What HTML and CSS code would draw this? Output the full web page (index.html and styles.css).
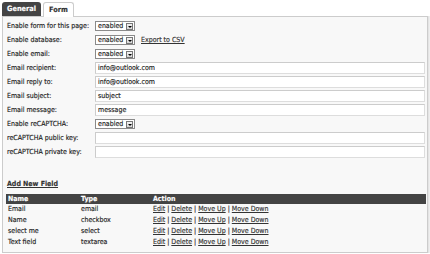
FILE: index.html
```html
<!DOCTYPE html>
<html>
<head>
<meta charset="utf-8">
<link rel="stylesheet" href="styles.css">
</head>
<body>
<div class="wrap">
  <div class="tabs">
    <div class="tab tab-dark">General</div>
    <div class="tab tab-active">Form</div>
  </div>
  <div class="panel">
    <div class="form">
      <div class="row"><span class="label">Enable form for this page:</span><span class="select"><span class="sv">enabled</span><span class="sb"></span></span></div>
      <div class="row"><span class="label">Enable database:</span><span class="select"><span class="sv">enabled</span><span class="sb"></span></span><a class="link export">Export to CSV</a></div>
      <div class="row"><span class="label">Enable email:</span><span class="select"><span class="sv">enabled</span><span class="sb"></span></span></div>
      <div class="row"><span class="label">Email recipient:</span><span class="input">info@outlook.com</span></div>
      <div class="row"><span class="label">Email reply to:</span><span class="input">info@outlook.com</span></div>
      <div class="row"><span class="label">Email subject:</span><span class="input">subject</span></div>
      <div class="row"><span class="label">Email message:</span><span class="input">message</span></div>
      <div class="row"><span class="label">Enable reCAPTCHA:</span><span class="select"><span class="sv">enabled</span><span class="sb"></span></span></div>
      <div class="row"><span class="label">reCAPTCHA public key:</span><span class="input"></span></div>
      <div class="row"><span class="label">reCAPTCHA private key:</span><span class="input"></span></div>
    </div>
    <a class="link add">Add New Field</a>
    <table class="fields">
      <thead>
        <tr><th class="c1">Name</th><th class="c2">Type</th><th>Action</th></tr>
      </thead>
      <tbody>
        <tr><td>Email</td><td>email</td><td><a class="link">Edit</a> | <a class="link">Delete</a> | <a class="link">Move Up</a> | <a class="link">Move Down</a></td></tr>
        <tr><td>Name</td><td>checkbox</td><td><a class="link">Edit</a> | <a class="link">Delete</a> | <a class="link">Move Up</a> | <a class="link">Move Down</a></td></tr>
        <tr><td>select me</td><td>select</td><td><a class="link">Edit</a> | <a class="link">Delete</a> | <a class="link">Move Up</a> | <a class="link">Move Down</a></td></tr>
        <tr><td>Text field</td><td>textarea</td><td><a class="link">Edit</a> | <a class="link">Delete</a> | <a class="link">Move Up</a> | <a class="link">Move Down</a></td></tr>
      </tbody>
    </table>
  </div>
</div>
</body>
</html>
```
FILE: styles.css
```css
* { box-sizing: border-box; }
html, body { margin: 0; padding: 0; background: #fff; }
body {
  font-family: "DejaVu Sans Condensed", "DejaVu Sans", sans-serif;
  font-size: 7px;
  color: #222;
  -webkit-text-stroke: 0.15px currentColor;
}
.wrap { padding: 2px 0 0 2px; width: 430px; }
.tabs { display: flex; gap: 2px; height: 14px; align-items: flex-start; }
.tab {
  font-weight: bold;
  font-size: 7.3px;
  border-radius: 3px 3px 0 0;
  text-align: center;
}
.tab-dark { width: 39px; height: 14px; line-height: 14px; background: #444; color: #fff; }
.tab-active {
  width: 31px;
  height: 15px;
  line-height: 13px;
  background: #fff;
  border: 1px solid #ccc;
  border-bottom: none;
  position: relative;
  color: #333;
}
.panel {
  width: 426px;
  height: 237px;
  border: 1px solid #ccc;
  background: #f8f8f8;
  box-shadow: 1px 0 0 #e4e4e4, 2px 0 0 #eee;
  padding: 2px 2px 0 3px;
}
.form { display: flex; flex-direction: column; }
.row { display: flex; align-items: center; height: 14px; }
.label { width: 89px; padding-left: 1px; white-space: nowrap; }
.select {
  display: flex;
  align-items: center;
  width: 40px;
  height: 10px;
  border: 1px solid #8a8a8a;
  background: #fff;
}
.sv { flex: 1; padding-left: 2px; line-height: 8px; }
.sb {
  width: 7px;
  height: 7px;
  margin-right: 1px;
  border: 1px solid #777;
  background: linear-gradient(#f2f2f2, #d8d8d8);
  position: relative;
  -webkit-text-stroke: 0;
}
.sb::after {
  content: "";
  position: absolute;
  left: 1px;
  top: 2px;
  border-left: 2px solid transparent;
  border-right: 2px solid transparent;
  border-top: 2px solid #000;
}
.input {
  flex: 1;
  height: 12px;
  line-height: 10px;
  border: 1px solid #ccc;
  border-right-color: #ddd;
  border-bottom-color: #ddd;
  background: #fff;
  padding-left: 2px;
}
.link { color: #333; text-decoration: underline; cursor: pointer; }
.export { margin-left: 6px; }
.add { display: block; margin-top: 20px; padding-left: 1px; line-height: 10px; font-weight: bold; }
.fields {
  margin-top: 5px;
  width: 420px;
  border-collapse: collapse;
}
.fields th {
  background: #444;
  color: #fff;
  text-align: left;
  font-weight: bold;
  height: 10px;
  line-height: 10px;
  padding: 0 0 0 2px;
}
.fields td { height: 11px; line-height: 11px; padding: 0 0 0 2px; }
.c1 { width: 73px; }
.c2 { width: 72px; }
```
